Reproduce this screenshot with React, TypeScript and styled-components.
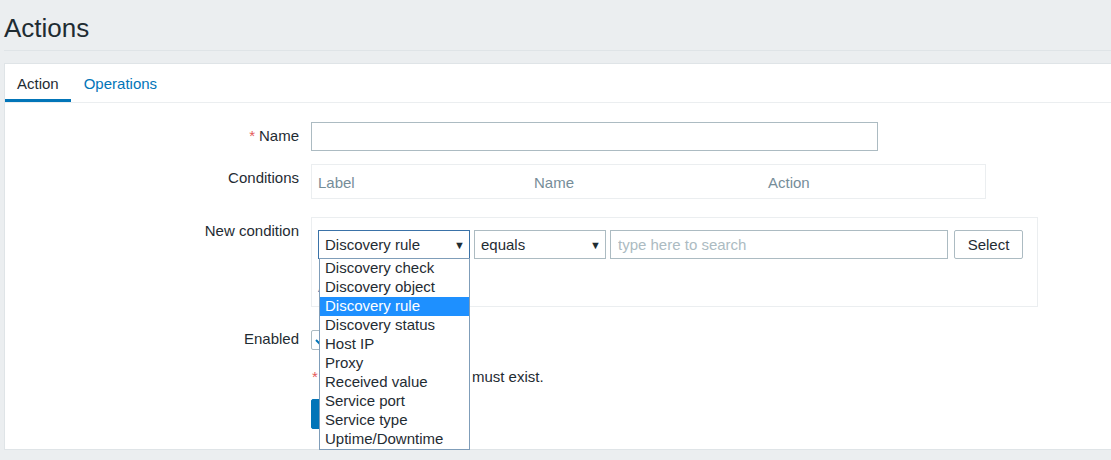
import React from "react";
import styled, { createGlobalStyle } from "styled-components";

const GlobalStyle = createGlobalStyle`
  html, body {
    margin: 0;
    padding: 0;
    background: #ebeef0;
    overflow: hidden;
  }
  body {
    font-family: "Liberation Sans", Arial, sans-serif;
    font-size: 15px;
    color: #1f2c33;
  }
`;

const Page = styled.div`
  padding: 0 0 0 4px;
  height: 460px;
  box-sizing: border-box;
`;

const Header = styled.header`
  height: 51px;
  box-sizing: border-box;
  padding-top: 13px;
  border-bottom: 1px solid #dfe4e7;
`;

const Title = styled.h1`
  margin: 0;
  font-size: 26px;
  line-height: 30px;
  font-weight: normal;
  color: #1f2c33;
`;

const Panel = styled.section`
  margin-top: 12px;
  width: calc(100% + 8px);
  background: #fff;
  border: 1px solid #dfe4e7;
  box-sizing: border-box;
`;

const TabBar = styled.nav`
  display: flex;
  height: 39px;
  box-sizing: border-box;
  border-bottom: 1px solid #ebeef0;
`;

const Tab = styled.a<{ $active?: boolean }>`
  display: flex;
  align-items: center;
  height: 38px;
  box-sizing: border-box;
  padding: 4px 12px 0;
  margin-right: ${(p) => (p.$active ? "1px" : "0")};
  border-bottom: 3px solid ${(p) => (p.$active ? "#0275b8" : "transparent")};
  color: ${(p) => (p.$active ? "#1f2c33" : "#0275b8")};
  cursor: pointer;
`;

const Form = styled.div`
  padding: 19px 0 20px;
`;

const Row = styled.div<{ $mt?: number }>`
  display: grid;
  grid-template-columns: 294px 1fr;
  column-gap: 12px;
  margin-top: ${(p) => p.$mt ?? 0}px;
`;

const Label = styled.label`
  text-align: right;
  line-height: 27px;
  white-space: nowrap;
`;

const Req = styled.span`
  color: #e45959;
  margin-right: 4px;
`;

const TextInput = styled.input<{ $w: number }>`
  width: ${(p) => p.$w}px;
  height: 29px;
  box-sizing: border-box;
  border: 1px solid #acbbc2;
  padding: 0 7px;
  font: inherit;
  color: #1f2c33;
  background: #fff;
  outline: none;
  &::placeholder {
    color: #acbbc2;
  }
`;

const CondTable = styled.div`
  width: 675px;
  height: 35px;
  box-sizing: border-box;
  border: 1px solid #ebeef0;
  display: grid;
  grid-template-columns: 216px 234px 1fr;
  align-items: center;
  padding-top: 1px;
`;

const HeadCell = styled.span`
  color: #768d99;
  padding-left: 6px;
`;

const CondBox = styled.div`
  width: 727px;
  height: 90px;
  box-sizing: border-box;
  border: 1px solid #ebeef0;
  padding: 12px 6px 0;
`;

const FieldLine = styled.div`
  display: flex;
  align-items: center;
`;

const SelectWrap = styled.div`
  position: relative;
`;

const SelectBox = styled.div<{ $w: number; $focus?: boolean }>`
  width: ${(p) => p.$w}px;
  height: 29px;
  box-sizing: border-box;
  border: 1px solid ${(p) => (p.$focus ? "#3a72a8" : "#acbbc2")};
  padding: 0 4px 0 6px;
  display: flex;
  align-items: center;
  justify-content: space-between;
  background: #fff;
  margin-right: 4px;
`;

const Arrow = styled.span`
  font-size: 11px;
  color: #1f2c33;
`;

const SelectButton = styled.button`
  height: 29px;
  width: 69px;
  margin-left: 6px;
  box-sizing: border-box;
  border: 1px solid #acbbc2;
  border-radius: 2px;
  background: #fff;
  font: inherit;
  color: #1f2c33;
  padding: 0;
`;

const AddLink = styled.a`
  display: block;
  margin-top: 18px;
  line-height: 19px;
  color: #0275b8;
`;

const Dropdown = styled.ul`
  position: absolute;
  top: calc(100% - 1px);
  left: 1px;
  width: 151px;
  box-sizing: border-box;
  margin: 0;
  padding: 0;
  list-style: none;
  background: #fff;
  border: 1px solid #7f9db9;
  z-index: 10;
`;

const Option = styled.li<{ $selected?: boolean }>`
  height: 19px;
  line-height: 18px;
  padding-left: 5px;
  white-space: nowrap;
  color: ${(p) => (p.$selected ? "#fff" : "#1f2c33")};
  background: ${(p) => (p.$selected ? "#1e90ff" : "#fff")};
`;

const CheckCell = styled.div`
  display: flex;
  align-items: center;
  height: 29px;
`;

const Checkbox = styled.span`
  width: 20px;
  height: 20px;
  box-sizing: border-box;
  border: 1px solid #acbbc2;
  border-radius: 2px;
  display: flex;
  align-items: center;
  justify-content: center;
`;

const Note = styled.div`
  line-height: 24px;
  height: 26px;
  padding-left: 1px;
`;

const Buttons = styled.div`
  display: flex;
  gap: 12px;
`;

const Button = styled.button<{ $primary?: boolean }>`
  height: 30px;
  padding: 0 11px;
  border-radius: 2px;
  font: inherit;
  border: 1px solid ${(p) => (p.$primary ? "#0275b8" : "#acbbc2")};
  background: ${(p) => (p.$primary ? "#0275b8" : "#fff")};
  color: ${(p) => (p.$primary ? "#fff" : "#1f2c33")};
`;

const options = [
  "Discovery check",
  "Discovery object",
  "Discovery rule",
  "Discovery status",
  "Host IP",
  "Proxy",
  "Received value",
  "Service port",
  "Service type",
  "Uptime/Downtime",
];

export default function App() {
  return (
    <>
      <GlobalStyle />
      <Page>
        <Header>
          <Title>Actions</Title>
        </Header>
        <Panel>
          <TabBar>
            <Tab $active>Action</Tab>
            <Tab>Operations</Tab>
          </TabBar>
          <Form>
            <Row>
              <Label>
                <Req>*</Req>Name
              </Label>
              <TextInput $w={567} />
            </Row>
            <Row $mt={13}>
              <Label>Conditions</Label>
              <CondTable>
                <HeadCell>Label</HeadCell>
                <HeadCell>Name</HeadCell>
                <HeadCell>Action</HeadCell>
              </CondTable>
            </Row>
            <Row $mt={18}>
              <Label>New condition</Label>
              <CondBox>
                <FieldLine>
                  <SelectWrap>
                    <SelectBox $w={152} $focus>
                      <span>Discovery rule</span>
                      <Arrow>▼</Arrow>
                    </SelectBox>
                    <Dropdown>
                      {options.map((o) => (
                        <Option key={o} $selected={o === "Discovery rule"}>
                          {o}
                        </Option>
                      ))}
                    </Dropdown>
                  </SelectWrap>
                  <SelectBox $w={132}>
                    <span>equals</span>
                    <Arrow>▼</Arrow>
                  </SelectBox>
                  <TextInput $w={338} placeholder="type here to search" />
                  <SelectButton>Select</SelectButton>
                </FieldLine>
                <AddLink>Add</AddLink>
              </CondBox>
            </Row>
            <Row $mt={18}>
              <Label>Enabled</Label>
              <CheckCell>
                <Checkbox>
                  <svg width="12" height="10" viewBox="0 0 12 10">
                    <path
                      d="M1 5l3.5 3.5L11 1.5"
                      fill="none"
                      stroke="#0275b8"
                      strokeWidth="2"
                    />
                  </svg>
                </Checkbox>
              </CheckCell>
            </Row>
            <Row $mt={11}>
              <span />
              <Note>
                <Req>*</Req>At least one operation must exist.
              </Note>
            </Row>
            <Row $mt={8}>
              <span />
              <Buttons>
                <Button $primary>Add</Button>
                <Button>Cancel</Button>
              </Buttons>
            </Row>
          </Form>
        </Panel>
      </Page>
    </>
  );
}
